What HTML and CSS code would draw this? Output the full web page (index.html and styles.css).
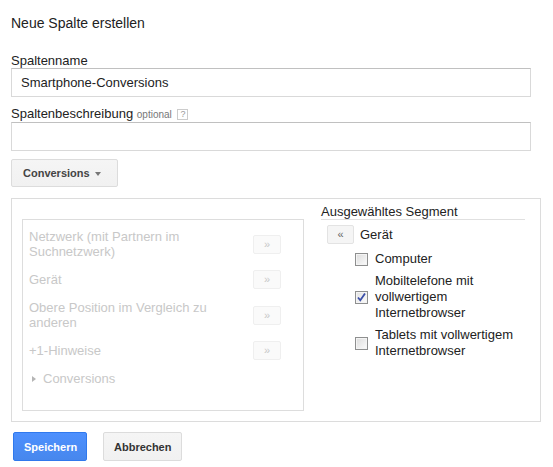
FILE: index.html
```html
<!DOCTYPE html>
<html lang="de">
<head>
<meta charset="utf-8">
<title>Neue Spalte erstellen</title>
<link rel="stylesheet" href="styles.css">
</head>
<body>
<div class="dialog">
  <div class="title">Neue Spalte erstellen</div>

  <div class="label">Spaltenname</div>
  <div class="input">Smartphone-Conversions</div>

  <div class="label label-gap">Spaltenbeschreibung <span class="optional">optional</span> <span class="help">?</span></div>
  <div class="input"></div>

  <div class="btn dropdown">Conversions <span class="caret"></span></div>

  <div class="segment-box">
    <div class="available">
      <div class="row">
        <div class="row-text">Netzwerk (mit Partnern im Suchnetzwerk)</div>
        <div class="add-btn">»</div>
      </div>
      <div class="row">
        <div class="row-text">Gerät</div>
        <div class="add-btn">»</div>
      </div>
      <div class="row">
        <div class="row-text">Obere Position im Vergleich zu anderen</div>
        <div class="add-btn">»</div>
      </div>
      <div class="row">
        <div class="row-text">+1-Hinweise</div>
        <div class="add-btn">»</div>
      </div>
      <div class="group"><span class="tri"></span>Conversions</div>
    </div>

    <div class="selected">
      <div class="sel-header">Ausgewähltes Segment</div>
      <div class="sel-title">
        <div class="remove-btn">«</div>
        <span>Gerät</span>
      </div>
      <div class="check-row">
        <span class="cb"></span>
        <span class="cb-label">Computer</span>
      </div>
      <div class="check-row">
        <span class="cb checked"><svg width="11" height="11" viewBox="0 0 11 11"><path d="M2 5.5 L4.3 8.3 L9 1.5" fill="none" stroke="#3b4fa8" stroke-width="1.8"/></svg></span>
        <span class="cb-label">Mobiltelefone mit vollwertigem Internetbrowser</span>
      </div>
      <div class="check-row">
        <span class="cb"></span>
        <span class="cb-label">Tablets mit vollwertigem Internetbrowser</span>
      </div>
    </div>
  </div>

  <div class="actions">
    <div class="btn primary">Speichern</div>
    <div class="btn">Abbrechen</div>
  </div>
</div>
</body>
</html>
```

FILE: styles.css
```css
html, body {
  margin: 0;
  padding: 0;
  background: #fff;
}

body {
  font-family: "Liberation Sans", Arial, sans-serif;
  color: #222;
  font-size: 13px;
}

.dialog {
  padding: 14px 12px 0 11px;
}

.title {
  font-size: 14px;
  line-height: 18px;
  color: #222;
  margin-bottom: 22px;
}

.label {
  font-size: 13px;
  line-height: 14px;
  color: #222;
}

.label-gap {
  margin-top: 10px;
}

.optional {
  font-size: 10px;
  color: #777;
}

.help {
  display: inline-block;
  width: 9px;
  height: 9px;
  border: 1px solid #ccc;
  font-size: 9px;
  line-height: 9px;
  text-align: center;
  color: #999;
  vertical-align: 1px;
  margin-left: 2px;
}

.input {
  box-sizing: border-box;
  width: 520px;
  height: 29px;
  border: 1px solid #d9d9d9;
  border-top-color: #c0c0c0;
  padding: 0 9px;
  font-size: 13px;
  line-height: 27px;
  color: #222;
}

.btn {
  display: inline-flex;
  align-items: center;
  box-sizing: border-box;
  height: 29px;
  padding: 0 10px;
  border: 1px solid #dcdcdc;
  border-radius: 2px;
  background: linear-gradient(#f5f5f5, #f1f1f1);
  font-size: 11px;
  font-weight: bold;
  color: #444;
}

.dropdown {
  margin-top: 8px;
  height: 28px;
  width: 107px;
  padding-left: 11px;
}

.caret {
  display: inline-block;
  width: 0;
  height: 0;
  border-left: 3.5px solid transparent;
  border-right: 3.5px solid transparent;
  border-top: 4px solid #777;
  margin-left: 5px;
  margin-top: 1px;
}

.segment-box {
  box-sizing: border-box;
  width: 530px;
  height: 224px;
  margin-top: 11px;
  border: 1px solid #dcdcdc;
  padding: 6px 15px 10px 10px;
  display: flex;
  gap: 17px;
}

.available {
  box-sizing: border-box;
  width: 282px;
  height: 192px;
  margin-top: 14px;
  border: 1px solid #ddd;
  padding: 3.5px 22px 0 6px;
  color: #c8c8c8;
  font-size: 13px;
  line-height: 15px;
}

.row {
  display: flex;
  align-items: center;
  padding: 5.5px 0;
}

.row-text {
  flex: 1;
  padding-right: 10px;
}

.add-btn {
  box-sizing: border-box;
  width: 28px;
  height: 19px;
  border: 1px solid #efefef;
  border-radius: 2px;
  background: #fafafa;
  color: #c8c8c8;
  font-size: 11px;
  line-height: 17px;
  text-align: center;
}

.group {
  display: flex;
  align-items: center;
  padding-top: 5.5px;
  padding-left: 3px;
}

.tri {
  width: 0;
  height: 0;
  border-top: 3.5px solid transparent;
  border-bottom: 3.5px solid transparent;
  border-left: 4px solid #b5b5b5;
  margin-right: 7px;
}

.selected {
  width: 204px;
  font-size: 13px;
  color: #222;
}

.sel-header {
  line-height: 14px;
  border-bottom: 1px solid #e0e0e0;
}

.sel-title {
  display: flex;
  align-items: center;
  gap: 6px;
  margin-top: 5px;
  padding-left: 6px;
  line-height: 19px;
}

.remove-btn {
  box-sizing: border-box;
  width: 27px;
  height: 19px;
  border: 1px solid #e3e3e3;
  border-radius: 2px;
  background: #f5f5f5;
  color: #666;
  font-size: 11px;
  line-height: 16px;
  text-align: center;
}

.check-row {
  display: flex;
  align-items: center;
  padding-left: 34px;
  margin-top: 6px;
  line-height: 16px;
}

.sel-title + .check-row {
  margin-top: 7px;
}

.cb {
  flex: none;
  box-sizing: border-box;
  width: 13px;
  height: 13px;
  border: 1px solid #8e8f8f;
  box-shadow: inset 0 0 0 1px #f4f4f4;
  background: linear-gradient(135deg, #dcdcdc, #fbfbfb);
  margin-right: 7px;
  margin-top: 1px;
  display: flex;
  align-items: center;
  justify-content: center;
}

.cb.checked {
  background: linear-gradient(135deg, #e2e2e2, #fbfbfb);
}

.cb-label {
  width: 150px;
}

.actions {
  display: flex;
  gap: 16px;
  margin-top: 10px;
  padding-left: 2px;
}

.actions .btn {
  height: 29px;
}

.primary {
  background: linear-gradient(#4d90fe, #4787ed);
  border-color: #3079ed;
  color: #fff;
  padding: 0 10px;
  width: 74px;
}

.actions .btn:not(.primary) {
  width: 79px;
  color: #333;
}
```
